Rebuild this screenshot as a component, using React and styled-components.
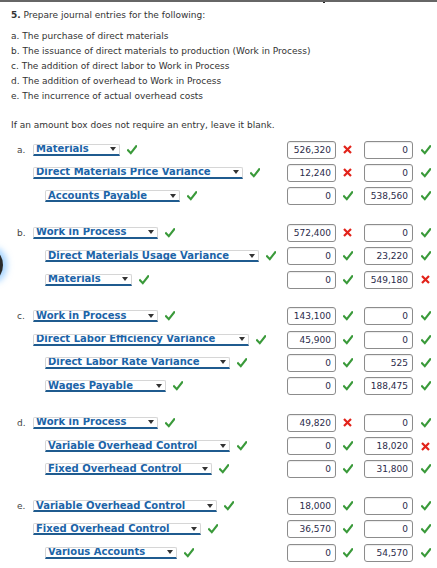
import React from "react";
import styled, { createGlobalStyle } from "styled-components";

const Global = createGlobalStyle`
  html, body { margin: 0; padding: 0; background: #fff; }
  body { font-family: "DejaVu Sans", Verdana, sans-serif; color: #333; }
`;

const Page = styled.div`
  position: relative;
  width: 437px;
  height: 568px;
  overflow: hidden;
  border-top: 2px solid #666;
  box-sizing: border-box;
  padding: 6px 0 0 11px;
  &::after {
    content: "";
    position: absolute;
    top: -2px;
    left: 323px;
    width: 2px;
    height: 3px;
    background: #222;
  }
`;

const Blob = styled.div`
  position: absolute;
  left: -13px;
  top: 250px;
  width: 16px;
  height: 26px;
  border-radius: 50%;
  background: #2a2a2a;
  box-shadow: 0 0 6px 4px rgba(90, 175, 255, 0.55);
`;

const Title = styled.p`
  margin: 0;
  font-size: 9px;
  line-height: 15px;
  color: #333;
  b { font-weight: bold; }
`;

const List = styled.div`
  margin-top: 6px;
  font-size: 9px;
  line-height: 15px;
  color: #333;
`;

const Note = styled.p`
  margin: 14px 0 0;
  font-size: 9px;
  line-height: 15px;
  color: #333;
`;

const Entries = styled.div`
  margin-top: 5px;
  display: flex;
  flex-direction: column;
  gap: 13.3px;
`;

const Group = styled.div`
  display: flex;
  flex-direction: column;
`;

const Row = styled.div`
  display: flex;
  align-items: center;
  height: 23.33px;
`;

const AccountCell = styled.div`
  width: 276px;
  display: flex;
  align-items: center;
`;

const Letter = styled.span`
  width: 22px;
  box-sizing: border-box;
  padding-left: 6px;
  font-size: 9px;
  color: #444;
`;

const Select = styled.div`
  width: ${(p) => p.$w}px;
  margin-left: ${(p) => (p.$indent ? 12 : 0)}px;
  height: 12px;
  box-sizing: border-box;
  border: 1px solid #d6d6d6;
  border-bottom: 2px solid #1f5b8f;
  border-radius: 2px 2px 0 0;
  background: #fff;
  display: flex;
  align-items: center;
  justify-content: space-between;
  padding: 0 3px 0 2px;
  font-size: 10px;
  font-weight: bold;
  line-height: 10px;
  color: #1c64a8;
  white-space: nowrap;
  overflow: hidden;
`;

const Arrow = styled.span`
  width: 0;
  height: 0;
  border-left: 3px solid transparent;
  border-right: 3px solid transparent;
  border-top: 4px solid #333;
  flex-shrink: 0;
`;

const AcctMark = styled.span`
  margin-left: 7px;
  display: flex;
`;

const Amount = styled.div`
  width: 49px;
  height: 18px;
  box-sizing: border-box;
  border: 1px solid #8c8c8c;
  border-radius: 3px;
  box-shadow: inset 0 1px 1px rgba(0, 0, 0, 0.08);
  font-size: 9px;
  line-height: 16px;
  text-align: right;
  padding-right: 4px;
  color: #2b2b4a;
`;

const MarkCell = styled.div`
  width: ${(p) => p.$w}px;
  box-sizing: border-box;
  padding-left: ${(p) => p.$pad}px;
  display: flex;
  align-items: center;
`;

const Check = () => (
  <svg width="10" height="10" viewBox="0 0 10 10">
    <path d="M1 5.2 L3.8 8.2 L9.2 1.2" fill="none" stroke="#3a9a3a" strokeWidth="2.1" strokeLinecap="square" strokeLinejoin="miter" />
  </svg>
);

const Cross = () => (
  <svg width="9" height="9" viewBox="0 0 9 9">
    <path d="M1 1 L8 8 M8 1 L1 8" fill="none" stroke="#e2231a" strokeWidth="2.2" />
  </svg>
);

const Mark = ({ ok }) => (ok ? <Check /> : <Cross />);

const groups = [
  {
    letter: "a.",
    rows: [
      { acct: "Materials", indent: 0, w: 87, dr: "526,320", drOk: false, cr: "0", crOk: true },
      { acct: "Direct Materials Price Variance", indent: 0, w: 210, dr: "12,240", drOk: false, cr: "0", crOk: true },
      { acct: "Accounts Payable", indent: 1, w: 135, dr: "0", drOk: true, cr: "538,560", crOk: true },
    ],
  },
  {
    letter: "b.",
    rows: [
      { acct: "Work in Process", indent: 0, w: 125, dr: "572,400", drOk: false, cr: "0", crOk: true },
      { acct: "Direct Materials Usage Variance", indent: 1, w: 214, dr: "0", drOk: true, cr: "23,220", crOk: true },
      { acct: "Materials", indent: 1, w: 87, dr: "0", drOk: true, cr: "549,180", crOk: false },
    ],
  },
  {
    letter: "c.",
    rows: [
      { acct: "Work in Process", indent: 0, w: 125, dr: "143,100", drOk: true, cr: "0", crOk: true },
      { acct: "Direct Labor Efficiency Variance", indent: 0, w: 216, dr: "45,900", drOk: true, cr: "0", crOk: true },
      { acct: "Direct Labor Rate Variance", indent: 1, w: 185, dr: "0", drOk: true, cr: "525", crOk: true },
      { acct: "Wages Payable", indent: 1, w: 121, dr: "0", drOk: true, cr: "188,475", crOk: true },
    ],
  },
  {
    letter: "d.",
    rows: [
      { acct: "Work in Process", indent: 0, w: 125, dr: "49,820", drOk: false, cr: "0", crOk: true },
      { acct: "Variable Overhead Control", indent: 1, w: 185, dr: "0", drOk: true, cr: "18,020", crOk: false },
      { acct: "Fixed Overhead Control", indent: 1, w: 167, dr: "0", drOk: true, cr: "31,800", crOk: true },
    ],
  },
  {
    letter: "e.",
    rows: [
      { acct: "Variable Overhead Control", indent: 0, w: 184, dr: "18,000", drOk: true, cr: "0", crOk: true },
      { acct: "Fixed Overhead Control", indent: 0, w: 168, dr: "36,570", drOk: true, cr: "0", crOk: true },
      { acct: "Various Accounts", indent: 1, w: 132, dr: "0", drOk: true, cr: "54,570", crOk: true },
    ],
  },
];

export default function App() {
  return (
    <>
      <Global />
      <Page>
        <Blob />
        <Title>
          <b>5.</b> Prepare journal entries for the following:
        </Title>
        <List>
          <div>a. The purchase of direct materials</div>
          <div>b. The issuance of direct materials to production (Work in Process)</div>
          <div>c. The addition of direct labor to Work in Process</div>
          <div>d. The addition of overhead to Work in Process</div>
          <div>e. The incurrence of actual overhead costs</div>
        </List>
        <Note>If an amount box does not require an entry, leave it blank.</Note>
        <Entries>
          {groups.map((g) => (
            <Group key={g.letter}>
              {g.rows.map((r, i) => (
                <Row key={i}>
                  <AccountCell>
                    <Letter>{i === 0 ? g.letter : ""}</Letter>
                    <Select $w={r.w} $indent={r.indent}>
                      <span>{r.acct}</span>
                      <Arrow />
                    </Select>
                    <AcctMark>
                      <Check />
                    </AcctMark>
                  </AccountCell>
                  <Amount>{r.dr}</Amount>
                  <MarkCell $w={28} $pad={7}>
                    <Mark ok={r.drOk} />
                  </MarkCell>
                  <Amount>{r.cr}</Amount>
                  <MarkCell $w={24} $pad={8}>
                    <Mark ok={r.crOk} />
                  </MarkCell>
                </Row>
              ))}
            </Group>
          ))}
        </Entries>
      </Page>
    </>
  );
}
